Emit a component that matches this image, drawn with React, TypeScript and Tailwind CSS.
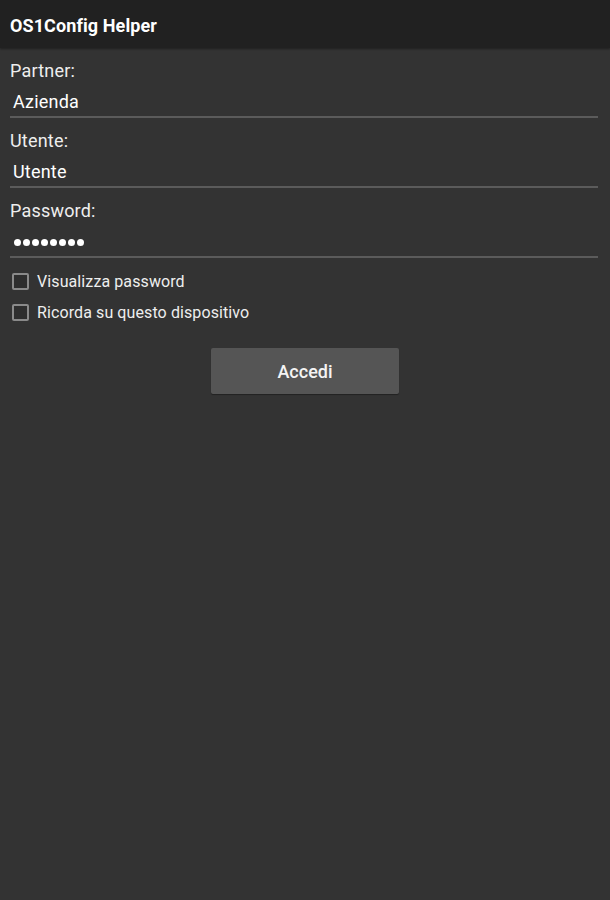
import { useState } from 'react'

const fields = [
  { label: 'Partner:', value: 'Azienda', type: 'text' },
  { label: 'Utente:', value: 'Utente', type: 'text' },
  { label: 'Password:', value: '12345678', type: 'password' },
]

const options = ['Visualizza password', 'Ricorda su questo dispositivo']

export default function App() {
  const [checked, setChecked] = useState([false, false])

  return (
    <div
      className="min-h-[900px] w-full bg-[#333333] text-[#f2f2f2]"
      style={{ fontFamily: 'Roboto, "Liberation Sans", sans-serif' }}
    >
      {/* Action bar */}
      <div className="flex h-[48px] items-center bg-[#212121] px-[10px] pt-[2px] shadow-[0_1px_2px_rgba(0,0,0,0.4)]">
        <span className="text-[18px] font-bold tracking-[0.1px] text-white">OS1Config Helper</span>
      </div>

      {/* Form */}
      <div className="flex flex-col px-[10px] pt-[12px]">
        {fields.map((f) => (
          <div key={f.label} className="flex flex-col pb-[12px]">
            <div className="h-[20px] pt-[1px] text-[18px] leading-[20px] tracking-[0.2px] text-[#eeeeee]">
              {f.label}
            </div>
            <div className="mt-[11px] flex h-[20px] items-center pl-[3px] pt-[1px] text-[18px] leading-[20px] tracking-[0.2px] text-white">
              {f.type === 'password' ? (
                <div className="flex gap-[2px] pl-[1px] pt-[2px]">
                  {f.value.split('').map((_, i) => (
                    <span key={i} className="h-[7px] w-[7px] rounded-full bg-white" />
                  ))}
                </div>
              ) : (
                f.value
              )}
            </div>
            <div className="mt-[5px] mr-[2px] h-[2px] bg-[#5b5b5b]" />
          </div>
        ))}

        {/* Checkboxes */}
        <div className="mt-[3px] flex flex-col gap-[14px] pl-[2px]">
          {options.map((o, i) => (
            <label key={o} className="flex h-[17px] items-center gap-[8px]">
              <button
                onClick={() => setChecked((c) => c.map((v, j) => (j === i ? !v : v)))}
                className="h-[17px] w-[17px] rounded-[2px] border-2 border-[#8a8a8a] bg-[#2e2e2e]"
              />
              <span className="text-[16px] leading-[17px] tracking-[0.1px] text-[#eeeeee]">{o}</span>
            </label>
          ))}
        </div>

        {/* Login button */}
        <div className="mt-[27px] flex justify-center">
          <button className="h-[46px] w-[188px] rounded-[2px] bg-[#555555] text-[18px] font-medium text-[#f4f4f4] shadow-[0_1px_1px_rgba(0,0,0,0.35)]">
            Accedi
          </button>
        </div>
      </div>
    </div>
  )
}
